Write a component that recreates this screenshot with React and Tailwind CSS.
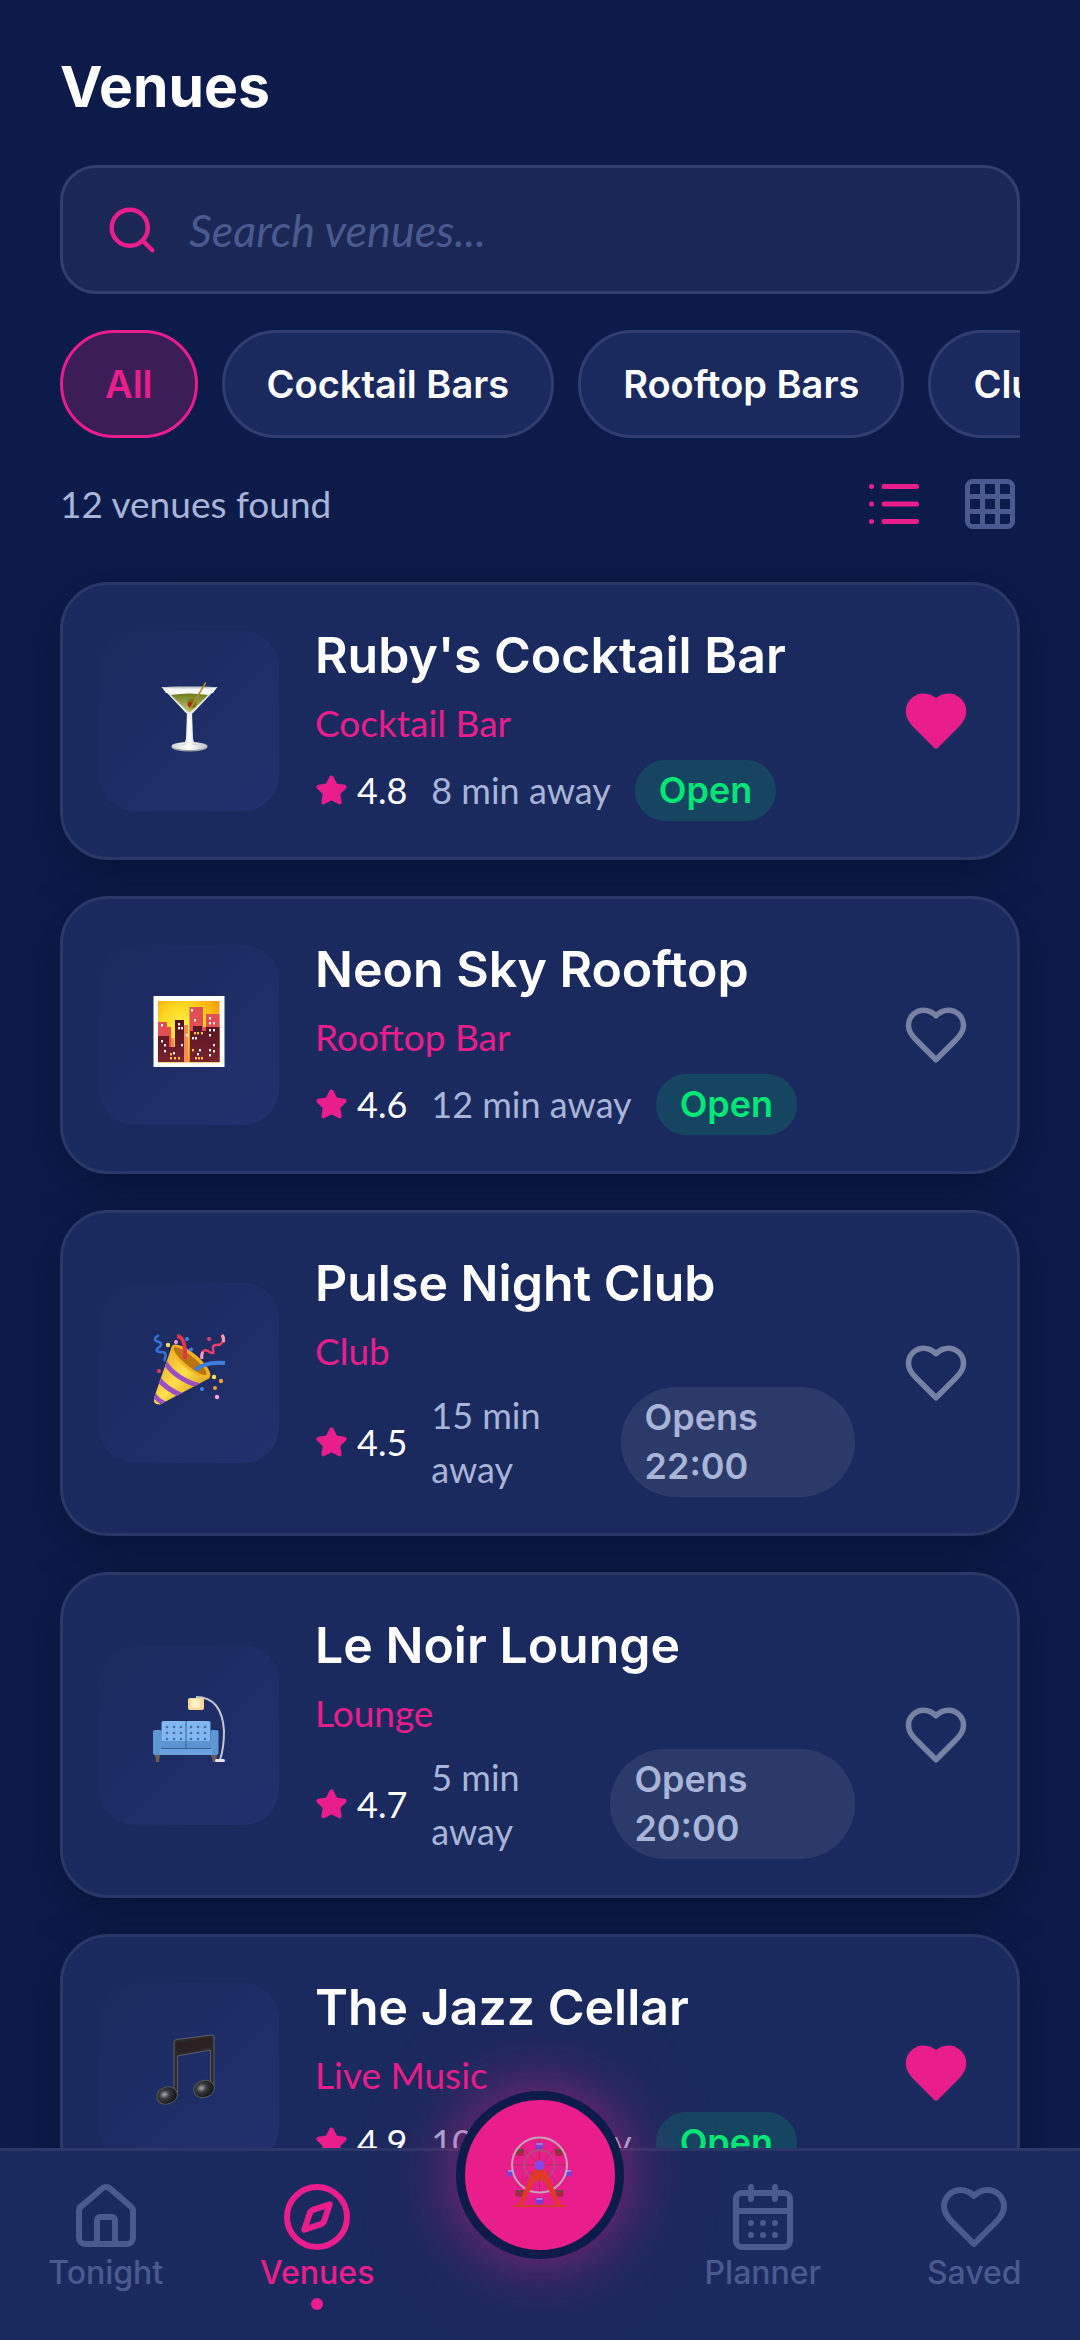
import { useState } from 'react'
import { CalendarDays, Compass, Grid3x3, House, List, Search, Star } from 'lucide-react'

const venues = [
  { id: 1, name: "Ruby's Cocktail Bar", type: 'Cocktail Bar', rating: '4.8', distance: '8 min away', status: 'Open', open: true, icon: MartiniArt },
  { id: 2, name: 'Neon Sky Rooftop', type: 'Rooftop Bar', rating: '4.6', distance: '12 min away', status: 'Open', open: true, icon: CityArt },
  { id: 3, name: 'Pulse Night Club', type: 'Club', rating: '4.5', distance: '15 min away', status: 'Opens 22:00', open: false, icon: PartyArt },
  { id: 4, name: 'Le Noir Lounge', type: 'Lounge', rating: '4.7', distance: '5 min away', status: 'Opens 20:00', open: false, icon: CouchArt },
  { id: 5, name: 'The Jazz Cellar', type: 'Live Music', rating: '4.9', distance: '10 min away', status: 'Open', open: true, icon: NotesArt },
]

const filters = ['All', 'Cocktail Bars', 'Rooftop Bars', 'Clubs']

function Heart({ className }) {
  return (
    <svg viewBox="0 0 24 24" fill="none" stroke="currentColor" strokeWidth="2" strokeLinecap="round" strokeLinejoin="round" className={className} aria-hidden="true">
      <path d="M19 14c1.490-1.460 3-3.210 3-5.500A5.500 5.500 0 0 0 16.500 3c-1.760 0-3 .5-4.500 2-1.500-1.500-2.740-2-4.500-2A5.500 5.500 0 0 0 2 8.500c0 2.300 1.500 4.050 3 5.500l7 7Z" />
    </svg>
  )
}

function MartiniArt() {
  return (
    <svg viewBox="0 0 72 72" className="size-18" aria-hidden="true">
      <defs>
        <linearGradient id="glass" x1="0" x2="1">
          <stop offset="0" stopColor="#cfd3d6" />
          <stop offset="0.5" stopColor="#ffffff" />
          <stop offset="1" stopColor="#b9bec4" />
        </linearGradient>
        <linearGradient id="gin" x1="0" y1="0" x2="0" y2="1">
          <stop offset="0" stopColor="#6f7a1c" />
          <stop offset="1" stopColor="#c3c77a" />
        </linearGradient>
      </defs>
      <ellipse cx="36.500" cy="65" rx="18" ry="4.500" fill="#9aa0a8" />
      <ellipse cx="36.500" cy="64" rx="18" ry="4" fill="url(#glass)" />
      <path d="M34 30h5l1 26q0 5 5 7H28q5-2 5-7z" fill="url(#glass)" />
      <path d="M8.500 5h56L41 30q-4.500 5-9 0z" fill="#e8ebea" />
      <path d="M9 5h55l-4 6q-23 3-47 0z" fill="#f7f8f8" />
      <path d="M18 13q18-3 37 0L40 28q-3.500 4-7 0z" fill="url(#gin)" />
      <ellipse cx="36.500" cy="5.500" rx="28" ry="1" fill="#c4c9cf" />
      <circle cx="39" cy="21.500" r="4.800" fill="#7d7414" />
      <circle cx="37.500" cy="22.500" r="2.600" fill="#a32f10" />
      <path d="M37 27 52.500 1" stroke="#b08a35" strokeWidth="1.500" strokeLinecap="round" />
    </svg>
  )
}

function CityArt() {
  const lights = [
    [25, 27], [28, 31], [25, 31], [28, 48], [38, 13], [41, 23], [56, 21], [56, 26], [60, 26], [8, 44], [11, 48], [11, 54],
    [33, 38], [39, 41], [42, 41], [56, 33], [60, 33], [56, 38], [60, 48], [56, 53], [60, 54], [46, 53], [44, 57], [56, 58], [20, 56], [8, 28],
  ]
  const warm = [[17, 57], [17, 61], [21, 61], [25, 61], [41, 36], [44, 36], [48, 36], [39, 53], [42, 61], [45, 61], [48, 61]]
  return (
    <svg viewBox="0 0 72 72" className="size-18" aria-hidden="true">
      <defs>
        <radialGradient id="sky" cx="0.4" cy="0.4" r="0.7">
          <stop offset="0" stopColor="#fff04a" />
          <stop offset="0.5" stopColor="#ffd51f" />
          <stop offset="1" stopColor="#f39a0b" />
        </radialGradient>
        <linearGradient id="tower" x1="0" y1="0" x2="0" y2="1">
          <stop offset="0" stopColor="#4f1220" />
          <stop offset="1" stopColor="#7a2230" />
        </linearGradient>
      </defs>
      <rect x="0.500" width="71" height="71" fill="#ffffff" />
      <rect x="5" y="5" width="61.500" height="61.500" fill="url(#sky)" />
      <path d="M16 66V42h5v24zM31 66V29h4v37z" fill="#f58a55" />
      <path d="M5 26h9v5h4v35H5zM36.500 11H50v20h3V18h13.500v48h-30z" fill="#e04f56" />
      <path d="M5 40h11v11h6V24h9v42H5zM37 35h3v-5h9v5h4v-4h13.500v35H37z" fill="url(#tower)" />
      {lights.map(([x, y]) => <rect key={`${x}-${y}`} x={x} y={y} width="2" height="2.400" fill="#fff3ea" />)}
      {warm.map(([x, y]) => <rect key={`${x}-${y}`} x={x} y={y} width="2" height="2.400" fill="#ffc62e" />)}
    </svg>
  )
}

function PartyArt() {
  return (
    <svg viewBox="0 0 72 72" className="size-18" fill="none" aria-hidden="true">
      <defs>
        <linearGradient id="cone" x1="0" y1="0" x2="1" y2="1">
          <stop offset="0.2" stopColor="#f0b429" />
          <stop offset="0.5" stopColor="#ffe04d" />
          <stop offset="0.9" stopColor="#c98a12" />
        </linearGradient>
        <clipPath id="coneShape">
          <path d="M19 12 1 64q-1 7 6 6.500L57 44z" />
        </clipPath>
      </defs>
      <path d="M19 12 1 64q-1 7 6 6.500L57 44z" fill="url(#cone)" />
      <g clipPath="url(#coneShape)" stroke="#9b4fc4" strokeWidth="5">
        <path d="M11 27q11 18 36 25M4 43q8 12 28 20M0 59q3 7 14 12" />
      </g>
      <ellipse cx="38" cy="27.500" rx="24.500" ry="8" transform="rotate(40 38 27.500)" fill="#f5b21e" />
      <ellipse cx="37" cy="27" rx="21" ry="5" transform="rotate(40 37 27)" fill="#b87410" />
      <path d="M24 2q9 1 8 23" stroke="#e8304c" strokeWidth="4" />
      <path d="M42 36q11-9 30-7" stroke="#3d7de0" strokeWidth="4" />
      <path d="M6 1q-8 5 0 7 5 2-1 6-4 4 4 4 6 0 2 9" stroke="#3471d8" strokeWidth="2.500" />
      <path d="M49 25q-1-11 6-8 7 5 5-2-1-5 6-4 6-2 3-10" stroke="#ef3f68" strokeWidth="2.500" />
      <path d="M49 25q-1-5 1-7M70 8q2-3-1-7" stroke="#ff9fb8" strokeWidth="3" />
      <g fill="#ffe34a"><circle cx="15" cy="11" r="2.200" /><circle cx="61" cy="43" r="2.200" /></g>
      <g fill="#f39a35"><circle cx="68" cy="47" r="2.200" /><circle cx="62" cy="54" r="2" /></g>
      <g fill="#3d82e8"><circle cx="34" cy="5" r="2" /><circle cx="38" cy="15.500" r="2" /><circle cx="49" cy="55" r="2" /></g>
      <g fill="#f7a1d8"><circle cx="23" cy="8" r="2" /><circle cx="64" cy="63" r="2.200" /></g>
      <g fill="#e83e63"><circle cx="56" cy="5" r="2" /><circle cx="6" cy="37" r="2" /></g>
    </svg>
  )
}

function CouchArt() {
  const tufts = [14, 21, 28, 38, 45, 52]
  return (
    <svg viewBox="0 0 72 72" className="size-18" fill="none" aria-hidden="true">
      <path d="M2 59h5l-1 7H3zM58 59h6l-1 7h-3z" fill="#6b5b57" />
      <path d="M43 1q26 0 28 34 0 17-4 29" stroke="#c3c6d2" strokeWidth="2" />
      <rect x="62" y="63" width="10" height="3" rx="1.500" fill="#e3e4ea" />
      <rect x="35" y="2" width="16" height="12" rx="2" fill="#f8d99a" />
      <rect x="38" y="3" width="9" height="9" rx="2" fill="#fff0c4" />
      <rect x="8.500" y="25" width="49" height="22" rx="2" fill="#82b7ef" />
      <rect x="0" y="34" width="9" height="25" rx="2" fill="#5f97d3" />
      <rect x="57.500" y="34" width="8" height="25" rx="2" fill="#5f97d3" />
      <rect x="8" y="45" width="50" height="7" rx="1" fill="#5c93cf" />
      <rect x="7" y="53" width="52" height="6" fill="#6ca3df" />
      <path d="M8 52.500h50M33 25v27" stroke="#335f96" />
      {tufts.map(x => (
        <g key={x} fill="#3e6fae">
          <circle cx={x} cy="31" r="1.300" />
          <circle cx={x} cy="37" r="1.300" />
          <circle cx={x} cy="43" r="1.300" />
        </g>
      ))}
    </svg>
  )
}

function NotesArt() {
  return (
    <svg viewBox="0 0 72 72" className="size-18" aria-hidden="true">
      <defs>
        <radialGradient id="noteHead" cx="0.4" cy="0.4" r="0.6">
          <stop offset="0" stopColor="#a8abb0" />
          <stop offset="0.4" stopColor="#3a3c40" />
          <stop offset="1" stopColor="#111214" />
        </radialGradient>
      </defs>
      <path d="M21 8q0-2 3-2.500L58 1q3 0 3 2v52h-3.500V16L24.500 22v40H21z" fill="#2e2a2b" stroke="#67696f" strokeWidth="0.800" />
      <path d="M23 9 58.500 3v10L24 20z" fill="#2d2020" />
      <ellipse cx="14" cy="61.500" rx="10.500" ry="8.500" transform="rotate(-18 14 61.500)" fill="url(#noteHead)" stroke="#54575c" />
      <ellipse cx="51" cy="55" rx="10.500" ry="8.500" transform="rotate(-18 51 55)" fill="url(#noteHead)" stroke="#54575c" />
    </svg>
  )
}

function FerrisWheelArt() {
  const purple = [[35.5, 10], [7, 37], [64, 37], [35.5, 65]]
  const red = [[16, 16], [55, 16], [15.5, 57], [55.5, 57]]
  return (
    <svg viewBox="0 0 72 72" className="size-18" fill="none" aria-hidden="true">
      <path d="M35.500 1v56M7.500 29h56M15.700 9.200l39.600 39.600M55.300 9.200 15.700 48.800" stroke="#a8324f" />
      <circle cx="35.500" cy="29" r="15" stroke="#b04c7c" strokeWidth="1.800" />
      {red.map(([x, y]) => (
        <g key={`${x}-${y}`}>
          <path d={`M${x - 4} ${y - 3}h8v6q-4 2-8 0z`} fill="#a02b42" />
          <path d={`M${x - 3} ${y - 3}h6v2h-6z`} fill="#6e4a3c" />
        </g>
      ))}
      {purple.map(([x, y]) => (
        <g key={`${x}-${y}`}>
          <path d={`M${x - 4} ${y - 3}h8v5q-4 3-8 0z`} fill="#7d3fd0" />
          <path d={`M${x - 3} ${y - 3}h6v2h-6z`} fill="#a478e0" />
        </g>
      ))}
      <circle cx="35.500" cy="29" r="27.500" stroke="#c6a3b8" strokeWidth="2" />
      <path d="M33 31h5q5 4 6 8l13 31h-4L41 47q-5.500-6-11 0L18 70h-4l13-31q1-4 6-8z" fill="#e0392b" />
      <path d="M10 70h51" stroke="#d63a2a" strokeWidth="2" strokeLinecap="round" />
      <circle cx="35.500" cy="29.500" r="5" fill="#8a45e8" />
    </svg>
  )
}

function VenueCard({ venue, saved, onToggle }) {
  const Art = venue.icon
  return (
    <article className="flex items-center gap-9 rounded-[48px] border-3 border-[#2a3767] bg-[#1b2a5e] p-9 shadow-[0_12px_48px_rgba(0,0,0,0.3)]">
      <div className="flex size-45 shrink-0 items-center justify-center rounded-[36px] bg-linear-135 from-[#1b2a5e] to-[#22306e] pb-1.5">
        <Art />
      </div>

      <div className="min-w-0 flex-1">
        <h2 className="font-[Inter,sans-serif] text-[50px] leading-[69px] font-semibold">{venue.name}</h2>
        <p className="mt-1.5 mb-[9px] text-[37px] leading-[54px] text-[#e91e8c]">{venue.type}</p>
        <div className="flex min-h-[62px] items-center gap-6">
          <span className="flex shrink-0 items-center gap-[9px] text-[36px] leading-[54px]">
            <Star className="size-[33px] fill-[#e91e8c] text-[#e91e8c]" />
            {venue.rating}
          </span>
          <span className="text-[36px] leading-[54px] text-[#a8b4d8]">{venue.distance}</span>
          {venue.open ? (
            <span className="rounded-[36px] bg-[#00e676]/15 px-6 py-1.5 font-[Inter,sans-serif] text-[36px] leading-[49px] font-semibold text-[#00e676]">
              {venue.status}
            </span>
          ) : (
            <span className="rounded-[60px] bg-white/8 px-6 py-1.5 font-[Inter,sans-serif] text-[36px] leading-[49px] font-semibold text-[#a8b4d8]">
              {venue.status}
            </span>
          )}
        </div>
      </div>

      <button onClick={onToggle} aria-label={`Save ${venue.name}`} className="shrink-0 p-3">
        <Heart className={saved ? 'size-[66px] fill-[#e91e8c] text-[#e91e8c]' : 'size-[66px] text-[#7681a4]'} />
      </button>
    </article>
  )
}

function NavItem({ icon: Icon, label, active }) {
  return (
    <a
      href="#"
      className={active
        ? 'flex flex-1 flex-col items-center pt-[30px] text-[#e91e8c]'
        : 'flex flex-1 flex-col items-center pt-[30px] text-[#4a5a8f]'}
    >
      <Icon className="size-18" />
      <span className="font-[Inter,sans-serif] text-[32px] leading-[39px] font-medium">{label}</span>
      {active && <span className="mt-1.5 size-3 rounded-full bg-[#e91e8c]" />}
    </a>
  )
}

function App() {
  const [filter, setFilter] = useState('All')
  const [saved, setSaved] = useState([1, 5])

  const toggleSaved = (id) => {
    setSaved(saved.includes(id) ? saved.filter(s => s !== id) : [...saved, id])
  }

  return (
    <div className="flex h-screen flex-col overflow-hidden bg-[#0d1b4b] font-[Lato,sans-serif] text-white">
      <main className="min-h-0 flex-1 overflow-y-auto px-15 pt-[45px] pb-15 [scrollbar-width:none]">
        <h1 className="font-[Inter,sans-serif] text-[57px] leading-[84px] font-bold">Venues</h1>

        {/* Search */}
        <label className="mt-9 flex h-[129px] items-center gap-[30px] rounded-[36px] border-3 border-[#323e6b] bg-[#1b2754] px-[42px]">
          <Search className="size-[54px] shrink-0 text-[#e91e8c]" />
          <input
            type="text"
            aria-label="Search venues"
            placeholder="Search venues..."
            className="min-w-0 flex-1 bg-transparent text-[45px] leading-[60px] outline-none placeholder:text-[#4a5a8f] placeholder:italic"
          />
        </label>

        {/* Filters */}
        <div className="mt-9 flex gap-6 overflow-x-auto [scrollbar-width:none]">
          {filters.map(f => (
            <button
              key={f}
              onClick={() => setFilter(f)}
              className={f === filter
                ? 'h-27 shrink-0 rounded-[60px] border-3 border-[#e91e8c] bg-[#3c1d58] px-[42px] font-[Inter,sans-serif] text-[38px] font-semibold text-[#e91e8c]'
                : 'h-27 shrink-0 rounded-[60px] border-3 border-[#303d6e] bg-[#1b2a5e] px-[42px] font-[Inter,sans-serif] text-[38px] font-semibold'}
            >
              {f}
            </button>
          ))}
        </div>

        <div className="mt-9 flex items-center justify-between">
          <p className="text-[37px] leading-[54px] text-[#a8b4d8]">12 venues found</p>
          <div className="flex gap-9">
            <button aria-label="List view"><List className="size-15 text-[#e91e8c]" /></button>
            <button aria-label="Grid view"><Grid3x3 className="size-15 text-[#4a5a8f]" /></button>
          </div>
        </div>

        {/* Venue list */}
        <div className="mt-12 flex flex-col gap-9">
          {venues.map(v => (
            <VenueCard key={v.id} venue={v} saved={saved.includes(v.id)} onToggle={() => toggleSaved(v.id)} />
          ))}
        </div>
      </main>

      {/* Bottom navigation */}
      <nav className="relative z-10 flex h-48 shrink-0 border-t-3 border-[#2a3767] bg-[#1b2a5e]">
        <NavItem icon={House} label="Tonight" />
        <NavItem icon={Compass} label="Venues" active />
        <div className="flex w-[234px] shrink-0 justify-center">
          <button
            aria-label="Plan my night"
            className="-mt-15 flex size-42 items-center justify-center rounded-full border-9 border-[#0d1b4b] bg-[#e91e8c] pb-1.5 shadow-[0_0_60px_rgba(233,30,140,0.5),0_0_120px_rgba(233,30,140,0.15)]"
          >
            <FerrisWheelArt />
          </button>
        </div>
        <NavItem icon={CalendarDays} label="Planner" />
        <NavItem icon={Heart} label="Saved" />
      </nav>
    </div>
  )
}

export default App
